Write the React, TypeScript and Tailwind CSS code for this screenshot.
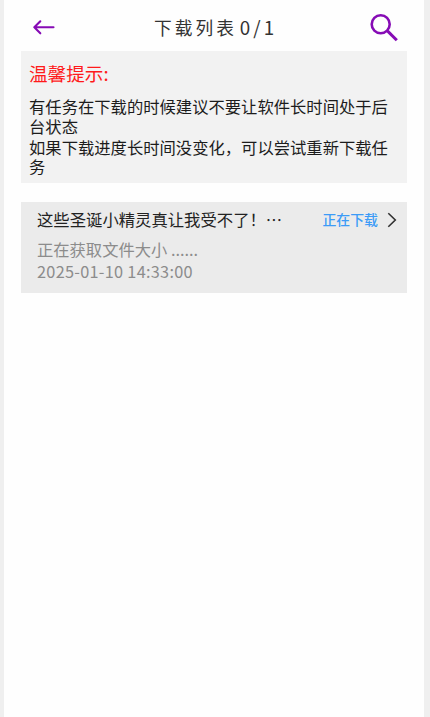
function BackIcon() {
  return (
    <svg className="h-[16px] w-[24px]" viewBox="0 0 24 16" fill="none" stroke="#860bb5" strokeWidth="2.1" strokeLinecap="round" strokeLinejoin="round">
      <path d="M8.3 2.3L2.3 8.3L8.3 14.3M2.3 8.3H21.5" />
    </svg>
  );
}

function SearchIcon() {
  return (
    <svg className="h-[29px] w-[29px]" viewBox="0 0 29 29" fill="none" stroke="#860bb5">
      <circle cx="10.7" cy="11.2" r="9" strokeWidth="2.6" />
      <path d="M17.4 17.9L26.8 27.2" strokeWidth="3" />
    </svg>
  );
}

function Header() {
  return (
    <header className="flex h-[51px] items-center pt-[3px] pr-[25px] pl-[28px]">
      <button className="flex w-[30px]" aria-label="返回">
        <BackIcon />
      </button>
      <h1 className="flex-1 pl-[92px] text-[17.7px] leading-[24px] tracking-[3.1px] whitespace-nowrap text-[#333]">
        下载列表<span className="pl-[2.5px] text-[18.8px]">0/1</span>
      </h1>
      <button aria-label="搜索">
        <SearchIcon />
      </button>
    </header>
  );
}

function Notice() {
  return (
    <section className="mx-[17px] h-[132px] bg-[#f2f2f2] pt-[10px] pl-[8px]">
      <h2 className="mb-[12px] text-[18.6px] leading-[24px] text-[#ff1a1a]">温馨提示:</h2>
      <div className="flex flex-col gap-[1.5px] text-[16.32px] leading-[19.5px] whitespace-nowrap text-[#1c1c1c]">
        <p>有任务在下载的时候建议不要让软件长时间处于后<br />台状态</p>
        <p>如果下载进度长时间没变化，可以尝试重新下载任<br />务</p>
      </div>
    </section>
  );
}

function DownloadItem() {
  return (
    <article className="mx-[17px] mt-[19px] h-[91px] bg-[#ebebeb] pt-[5px] pr-[10px] pl-[16px]">
      <div className="flex h-[24px] items-center whitespace-nowrap">
        <span className="flex-1 text-[16.35px] leading-[24px] text-[#222]">这些圣诞小精灵真让我受不了！…</span>
        <span className="mr-[9px] text-[13.9px] leading-[24px] font-medium text-[#3c9bf7]">正在下载</span>
        <svg className="mt-px h-[16px] w-[10px]" viewBox="0 0 10 16" fill="none" stroke="#303030" strokeWidth="1.6">
          <path d="M1.3 1.2L8.3 8L1.3 14.8" />
        </svg>
      </div>
      <p className="mt-[6px] text-[16.3px] leading-[24px] text-[#8c8c8c]">正在获取文件大小 ......</p>
      <p className="-mt-px text-[16.3px] leading-[22px] tracking-[0.28px] text-[#8c8c8c]">2025-01-10 14:33:00</p>
    </article>
  );
}

export default function App() {
  return (
    <div className="h-screen overflow-hidden bg-[#efefef] pr-[6px] pl-[4px] font-['Noto_Sans_CJK_SC',sans-serif]">
      <main lang="zh-CN" className="h-full bg-[#fefefe]">
        <Header />
        <Notice />
        <DownloadItem />
      </main>
    </div>
  );
}
